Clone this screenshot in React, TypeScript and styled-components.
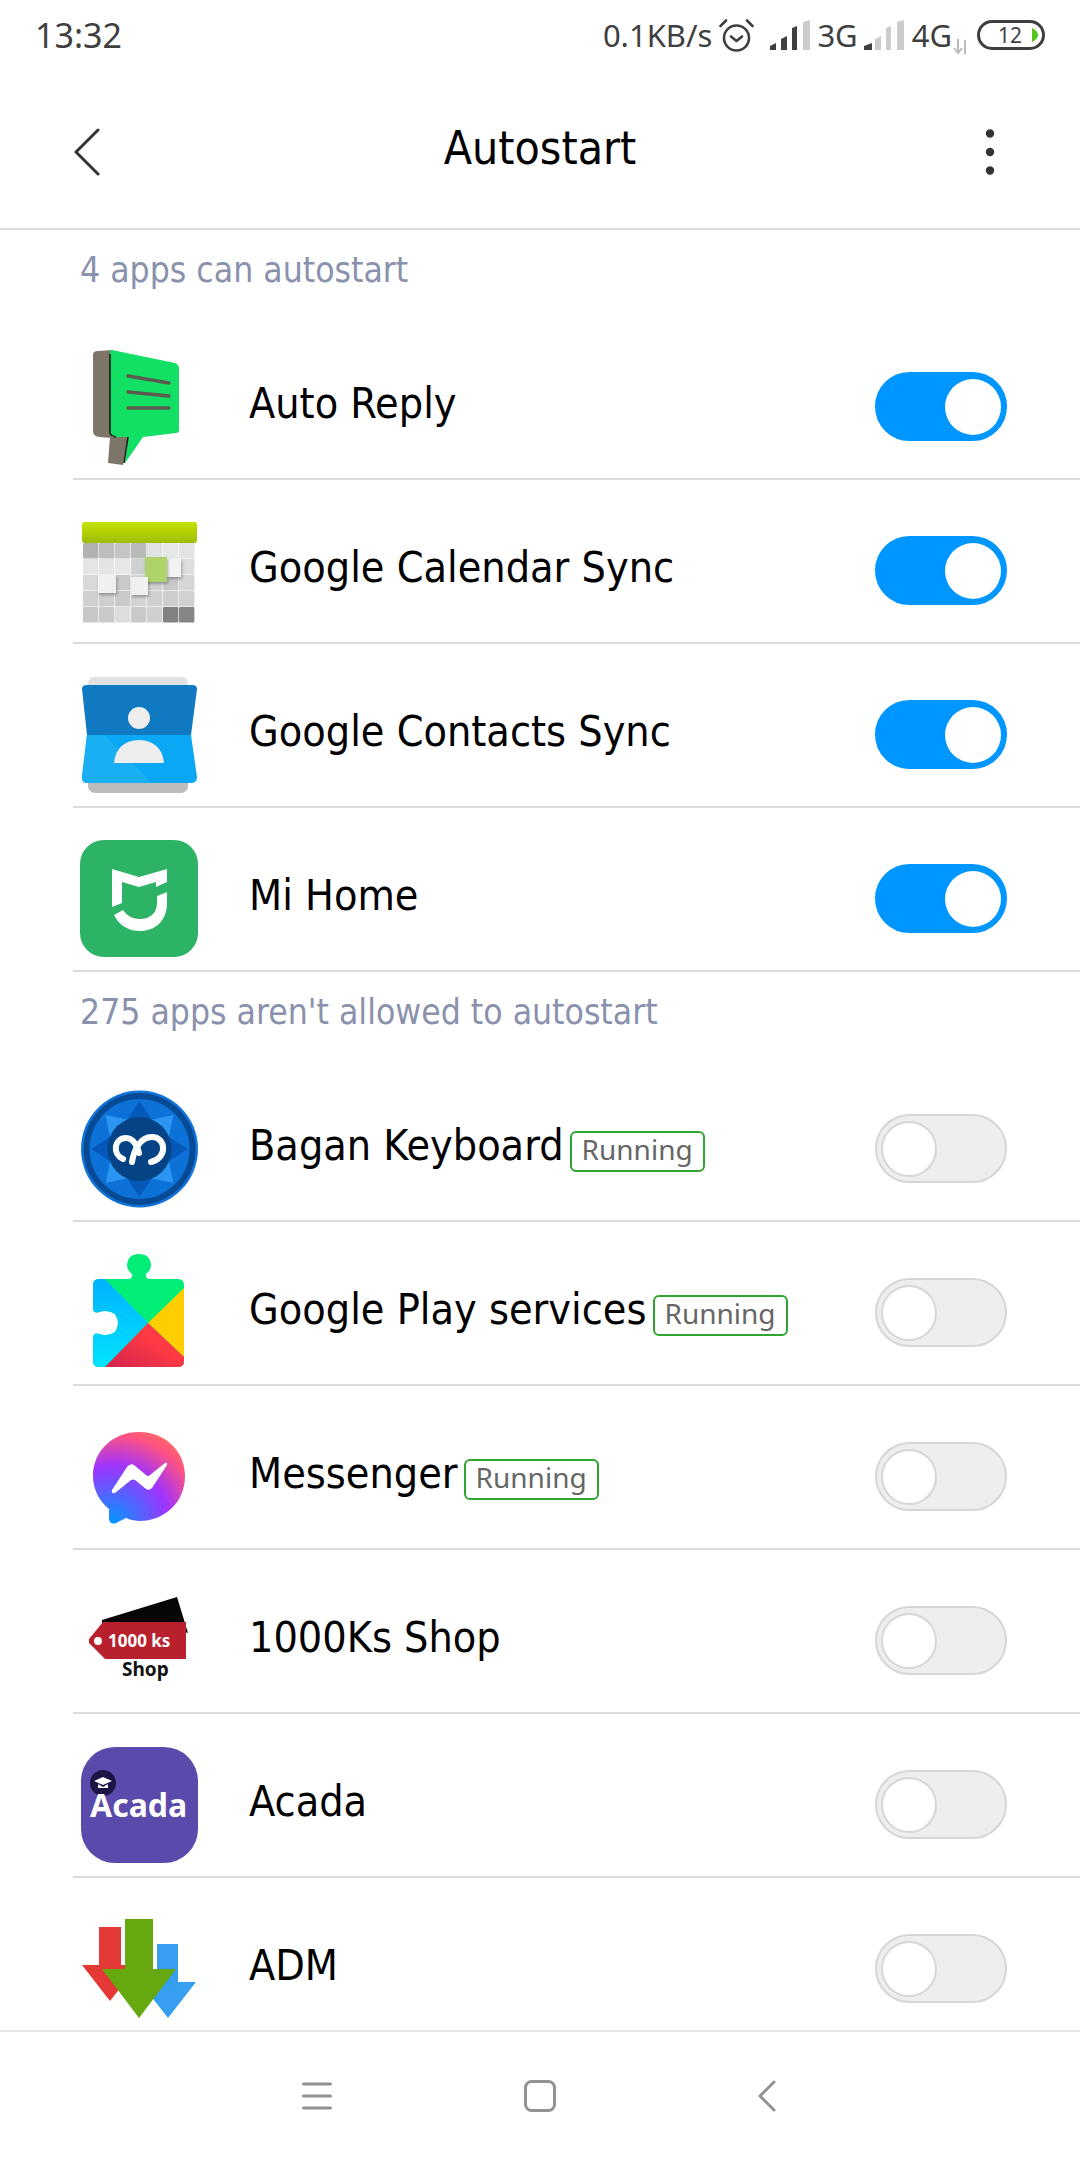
import React from 'react';
import styled, { createGlobalStyle } from 'styled-components';

const GlobalStyle = createGlobalStyle`
  html, body { margin: 0; padding: 0; background: #fff; }
  body { font-family: "DejaVu Sans", "Noto Sans", sans-serif; font-stretch: condensed; }
`;

const Screen = styled.div`
  width: 1080px;
  height: 2160px;
  display: flex;
  flex-direction: column;
  background: #fff;
  overflow: hidden;
`;

const StatusBar = styled.div`
  height: 70px;
  flex: none;
  display: flex;
  align-items: center;
  padding: 0 35px 0 35px;
  color: #3f3f3f;
  font-family: "Noto Sans", sans-serif;
  font-size: 31px;
  font-stretch: normal;
`;

const Clock = styled.span`
  flex: 1;
  font-size: 34px;
`;

const StatusItem = styled.span<{ $gap?: number }>`
  display: flex;
  align-items: center;
  margin-left: ${(p) => p.$gap ?? 0}px;
`;

const Header = styled.div`
  height: 160px;
  flex: none;
  display: grid;
  grid-template-columns: 1fr auto 1fr;
  align-items: center;
  box-sizing: border-box;
  padding-top: 5px;
  border-bottom: 2px solid #dcdcdc;
`;

const BackSlot = styled.div`
  display: flex;
  padding-left: 74px;
`;

const MenuSlot = styled.div`
  display: flex;
  justify-content: flex-end;
  padding-right: 85px;
`;

const Title = styled.div`
  font-size: 46px;
  color: #000;
  margin-top: -7px;
`;

const List = styled.div`
  flex: 1;
  min-height: 0;
  overflow: hidden;
`;

const SectionLabel = styled.div`
  height: 86px;
  box-sizing: border-box;
  padding: 20px 0 0 80px;
  font-size: 35.2px;
  line-height: 40px;
  color: #8a91ad;
`;

const Row = styled.div`
  height: 164px;
  box-sizing: border-box;
  margin-left: 73px;
  padding: 18px 73px 0 7px;
  display: flex;
  align-items: center;
  border-bottom: 2px solid #dcdcdc;
`;

const IconSlot = styled.div`
  width: 120px;
  height: 120px;
  flex: none;
  margin-right: 49px;
`;

const Name = styled.div`
  font-size: 42.7px;
  color: #000;
  margin-top: -6px;
`;

const Badge = styled.span`
  margin: 6px 0 0 6px;
  height: 41px;
  box-sizing: border-box;
  padding: 0 10px 4px;
  display: inline-flex;
  align-items: center;
  border: 2px solid #2fa52f;
  border-radius: 6px;
  font-family: "Noto Sans", sans-serif;
  font-stretch: normal;
  font-size: 28px;
  color: #666;
`;

const Spacer = styled.div`
  flex: 1;
`;

const Switch = styled.div<{ $on?: boolean }>`
  position: relative;
  width: 132px;
  height: 69px;
  flex: none;
  box-sizing: border-box;
  border-radius: 35px;
  background: ${(p) => (p.$on ? '#0096ff' : '#eeeeee')};
  border: 2px solid ${(p) => (p.$on ? '#0096ff' : '#d6d6d6')};
`;

const Knob = styled.div<{ $on?: boolean }>`
  position: absolute;
  top: 5px;
  width: 56px;
  height: 56px;
  box-sizing: border-box;
  border-radius: 50%;
  background: #fff;
  left: ${(p) => (p.$on ? 68 : 4)}px;
  border: ${(p) => (p.$on ? 'none' : '2px solid #d6d6d6')};
`;

const NavBar = styled.div`
  height: 130px;
  flex: none;
  box-sizing: border-box;
  border-top: 2px solid #e8e8e8;
  display: flex;
  align-items: center;
  justify-content: center;
  gap: 192px;
  padding-right: 2px;
  background: #fff;
`;

const NavBack = styled.span`
  display: flex;
  margin-left: 10px;
`;

const Toggle = ({ on }: { on?: boolean }) => (
  <Switch $on={on}>
    <Knob $on={on} />
  </Switch>
);

const AutoReplyIcon = () => (
  <svg width="120" height="120" viewBox="0 0 120 120">
    <path d="M13 9 Q13 5 18 5 L32 4 L32 92 L19 91 Q13 90 13 85Z" fill="#7d7668" />
    <path d="M30 91 L48 91 L43 119 L28 117Z" fill="#7d7668" />
    <path d="M32 4 L95 17 Q99 19 99 22 L99 84 Q99 87 96 87 L63 91 L45 117 L48 91 L36 91 Q30 90 30 86 L30 8 Q30 4 32 4Z" fill="#12e064" />
    <path d="M30 8 L30 87 Q31 90 36 91 M48 91 L44 117" fill="none" stroke="#1c1c18" strokeWidth="1.6" />
    <path d="M48 30 L89 37 M48 46 L89 50 M48 62 L89 62" stroke="#5d5a4f" strokeWidth="3.4" strokeLinecap="round" />
  </svg>
);

const CalendarIcon = () => {
  const shades = [
    ['#b0b2b0', '#bcbebc', '#c4c6c4', '#b8bab8', '#e0e2e2', '#e6e8e8', '#e2e4e4'],
    ['#e4e6e6', '#e3e5e5', '#e6e8e8', '#cfd1d1', '#d8dada', '#e6e8e8', '#dcdede'],
    ['#d8dada', '#dcdede', '#c8caca', '#d4d6d6', '#d0d2d2', '#c8caca', '#d4d6d6'],
    ['#cfd1d1', '#cdcfcf', '#c9cbcb', '#d2d4d4', '#cfd1d1', '#cdcfcf', '#d0d2d2'],
    ['#c6c8c8', '#c9cbcb', '#dcdede', '#c8caca', '#cfd1d1', '#808282', '#858787'],
  ];
  return (
    <svg width="120" height="120" viewBox="0 0 120 120">
      <defs>
        <linearGradient id="calTop" x1="0" y1="0" x2="0" y2="1">
          <stop offset="0" stopColor="#c6e200" />
          <stop offset="1" stopColor="#9dbd0a" />
        </linearGradient>
        <filter id="calShadow" x="-30%" y="-30%" width="160%" height="160%">
          <feDropShadow dx="1" dy="2" stdDeviation="1.5" floodColor="#000" floodOpacity="0.3" />
        </filter>
      </defs>
      {shades.map((row, r) =>
        row.map((c, i) => (
          <rect key={`${r}-${i}`} x={3 + i * 16} y={33 + r * 16} width={15.4} height={15.4} rx="1" fill={c} />
        )),
      )}
      <rect x="2" y="12" width="115" height="21" rx="3" fill="url(#calTop)" />
      <rect x="87" y="49" width="14" height="18" fill="#f2f2f2" filter="url(#calShadow)" />
      <rect x="65" y="47" width="22" height="25" fill="#aed36b" filter="url(#calShadow)" />
      <rect x="51" y="67" width="17" height="18" fill="#f0f0f0" filter="url(#calShadow)" />
      <rect x="18" y="65" width="18" height="18" fill="#f0f0f0" filter="url(#calShadow)" />
    </svg>
  );
};

const ContactsIcon = () => (
  <svg width="120" height="120" viewBox="0 0 120 120">
    <rect x="8" y="3" width="100" height="22" rx="6" fill="#e2e2e2" />
    <rect x="8" y="97" width="100" height="22" rx="7" fill="#bcbcbc" />
    <path d="M2 15 Q2 11 7 11 L112 11 Q117 11 117 15 L111 61 L7 61Z" fill="#0f79c2" />
    <path d="M7 61 L111 61 L117 103 Q117 109 111 109 L7 109 Q2 109 2 103Z" fill="#09a7f4" />
    <path d="M7 61 L24 61 L72 109 L7 109 Q2 109 2 103Z" fill="#1aaef3" />
    <circle cx="59" cy="44" r="11" fill="#eeeeee" />
    <path d="M34 89 Q36 67 59 66 Q82 67 84 89Z" fill="#eeeeee" />
  </svg>
);

const MiHomeIcon = () => (
  <svg width="120" height="120" viewBox="0 0 120 120">
    <rect x="0" y="2" width="118" height="117" rx="24" fill="#2cb366" />
    <path d="M32 31 L59 39 L87 31 L87 44 L76 49 L76 44 L59 49 L42 44 L42 65 L32 69Z" fill="#fff" />
    <path d="M87 54 L87 67 C86 84 74 93 60 93 C48 93 39 87 34 77 L43 72 C47 78 53 81 60 81 C70 81 77 75 77 65 L77 58Z" fill="#fff" />
  </svg>
);

const BaganIcon = () => {
  const petals = [0, 45, 90, 135, 180, 225, 270, 315];
  return (
    <svg width="120" height="120" viewBox="0 0 120 120">
      <circle cx="59.5" cy="61" r="58.5" fill="#1273d8" />
      <circle cx="59.5" cy="61" r="56" fill="#064a96" />
      <circle cx="59.5" cy="61" r="50" fill="#0c72d8" />
      {petals.map((a) => (
        <path key={a} d="M59.5 13 L72 32 L59.5 42 L47 32Z" fill={a % 90 === 0 ? '#0558b8' : '#2a96f2'} transform={`rotate(${a} 59.5 61)`} />
      ))}
      <circle cx="59.5" cy="61" r="32" fill="#064385" />
      <path d="M43 71 C32 66 34 50 46 50 C54 50 58 60 59 65" fill="none" stroke="#fff" strokeWidth="6" strokeLinecap="round" />
      <path d="M52 74 C54 62 60 49 72 49 C86 49 88 70 71 74" fill="none" stroke="#fff" strokeWidth="6" strokeLinecap="round" />
    </svg>
  );
};

const PlayIcon = () => (
  <svg width="120" height="120" viewBox="0 0 120 120">
    <defs>
      <linearGradient id="playRed" x1="0" y1="1" x2="1" y2="0">
        <stop offset="0" stopColor="#d2224f" />
        <stop offset="0.6" stopColor="#ff3a44" />
      </linearGradient>
      <linearGradient id="playBlue" x1="0" y1="0" x2="0" y2="1">
        <stop offset="0" stopColor="#00b2ff" />
        <stop offset="1" stopColor="#00e3ff" />
      </linearGradient>
      <clipPath id="playClip">
        <path d="M19 27 Q13 27 13 33 L13 57 Q14 62 19 60 Q28 57 35 62 Q41 71 35 80 Q28 85 19 82 Q14 80 13 85 L13 109 Q13 115 19 115 L98 115 Q104 115 104 109 L104 33 Q104 27 98 27 L69 27 Q65 26 66 22 Q71 18 71 13 Q70 2 59 2 Q48 2 47 13 Q47 18 52 22 Q53 26 49 27Z" />
      </clipPath>
    </defs>
    <g clipPath="url(#playClip)">
      <rect x="0" y="0" width="120" height="120" fill="#00ee76" />
      <path d="M10 27 L25 27 L68 71 L25 115 L10 115Z" fill="url(#playBlue)" />
      <path d="M104 36 L104 105 L68 71Z" fill="#ffce00" />
      <path d="M25 115 L68 71 L104 105 L104 115Z" fill="url(#playRed)" />
    </g>
  </svg>
);

const MessengerIcon = () => (
  <svg width="120" height="120" viewBox="0 0 120 120">
    <defs>
      <radialGradient id="msgBg" cx="0.2" cy="1" r="1.15">
        <stop offset="0" stopColor="#0099ff" />
        <stop offset="0.55" stopColor="#a033ff" />
        <stop offset="0.85" stopColor="#ff5280" />
        <stop offset="1" stopColor="#ff7061" />
      </radialGradient>
    </defs>
    <path d="M59 16 C33 16 13 35 13 60 C13 73 19 85 29 93 L29 103 Q30 109 36 107 L46 102 Q52 105 59 105 C85 105 105 86 105 60 C105 35 85 16 59 16Z" fill="url(#msgBg)" />
    <path d="M32 74 L47 51 Q50 47 54 49 L66 59 Q68 61 70 59 L85 47 Q88 46 87 49 L72 72 Q69 75 66 73 L55 64 Q53 63 51 64 L35 77 Q31 78 32 74Z" fill="#fff" />
  </svg>
);

const ShopIcon = () => (
  <svg width="120" height="120" viewBox="0 0 120 120">
    <path d="M22 40 L97 17 L108 53 L100 50 L22 44Z" fill="#060606" />
    <path d="M23 42 L106 42 L106 79 L25 79 L9 63 L9 59Z" fill="#b8202e" />
    <circle cx="18" cy="61" r="4" fill="#fff" />
    <text x="28" y="67" fontFamily="Noto Sans, sans-serif" fontWeight="700" fontSize="17" fill="#fff">1000 ks</text>
    <text x="42" y="96" fontFamily="Noto Sans, sans-serif" fontWeight="700" fontSize="19" fill="#111">Shop</text>
  </svg>
);

const AcadaIcon = () => (
  <svg width="120" height="120" viewBox="0 0 120 120">
    <rect x="1" y="3" width="117" height="116" rx="34" fill="#5a4aab" />
    <circle cx="23" cy="39" r="13" fill="#1b1546" />
    <path d="M14 37 L23 33 L32 37 L23 41Z M18 40 L18 44 L28 44 L28 40 L23 43Z" fill="#fff" />
    <text x="10" y="73" fontFamily="Noto Sans, sans-serif" fontWeight="700" fontSize="32" fill="#fff">Acada</text>
  </svg>
);

const AdmIcon = () => (
  <svg width="120" height="120" viewBox="0 0 120 120">
    <path d="M19 19 L41 19 L41 57 L58 57 L30 93 L2 57 L19 57Z" fill="#e53935" />
    <path d="M77 36 L98 36 L98 74 L116 74 L88 110 L60 74 L77 74Z" fill="#369ff0" />
    <path d="M45 11 L73 11 L73 61 L96 61 L59 110 L22 61 L45 61Z" fill="#66a80f" />
  </svg>
);

const apps1 = [
  { name: 'Auto Reply', icon: <AutoReplyIcon /> },
  { name: 'Google Calendar Sync', icon: <CalendarIcon /> },
  { name: 'Google Contacts Sync', icon: <ContactsIcon /> },
  { name: 'Mi Home', icon: <MiHomeIcon /> },
];

const apps2 = [
  { name: 'Bagan Keyboard', icon: <BaganIcon />, running: true },
  { name: 'Google Play services', icon: <PlayIcon />, running: true },
  { name: 'Messenger', icon: <MessengerIcon />, running: true },
  { name: '1000Ks Shop', icon: <ShopIcon /> },
  { name: 'Acada', icon: <AcadaIcon /> },
  { name: 'ADM', icon: <AdmIcon /> },
];

export default function App() {
  return (
    <Screen>
      <GlobalStyle />
      <StatusBar>
        <Clock>13:32</Clock>
        <StatusItem>0.1KB/s</StatusItem>
        <StatusItem $gap={7}>
          <svg width="35" height="34" viewBox="0 0 35 34" fill="none" stroke="#3f3f3f" strokeWidth="2.6" strokeLinecap="round" strokeLinejoin="round">
            <circle cx="17.5" cy="20" r="12.5" />
            <path d="M12 18.5 L17.5 23 L23 18.5" />
            <path d="M1.5 8 L7 2.5 M33.5 8 L28 2.5" />
          </svg>
        </StatusItem>
        <StatusItem $gap={16}>
          <svg width="40" height="30" viewBox="0 0 40 30">
            <path d="M0 30 L0 26 L6 23 L6 30Z M11 30 L11 19 L17 16 L17 30Z M22 30 L22 8 L27 6 L27 30Z" fill="#3f3f3f" />
            <path d="M33 30 L33 2 L40 0 L40 30Z" fill="#cccccc" />
          </svg>
        </StatusItem>
        <StatusItem $gap={7}>3G</StatusItem>
        <StatusItem $gap={6}>
          <svg width="40" height="30" viewBox="0 0 40 30">
            <path d="M0 30 L0 26 L8 23 L8 30Z" fill="#3f3f3f" />
            <path d="M11 30 L11 19 L17 16 L17 30Z M22 30 L22 8 L27 6 L27 30Z M33 30 L33 2 L40 0 L40 30Z" fill="#cccccc" />
          </svg>
        </StatusItem>
        <StatusItem $gap={8}>4G</StatusItem>
        <StatusItem $gap={2}>
          <svg width="14" height="15" viewBox="0 0 14 15" style={{ marginTop: 22 }} fill="none" stroke="#bbb" strokeWidth="2">
            <path d="M4 0 L4 14 M0 9 L4 14 L8 9 M11 15 L11 1" />
          </svg>
        </StatusItem>
        <StatusItem $gap={9}>
          <svg width="68" height="30" viewBox="0 0 68 30">
            <rect x="1.5" y="1.5" width="65" height="27" rx="13.5" fill="none" stroke="#3f3f3f" strokeWidth="3" />
            <path d="M55 8 Q61 11 61 15 Q61 19 55 22Z" fill="#52c41a" />
            <text x="21" y="23" fontFamily="Noto Sans, sans-serif" fontSize="21" fill="#3f3f3f">12</text>
          </svg>
        </StatusItem>
      </StatusBar>

      <Header>
        <BackSlot>
          <svg width="26" height="48" viewBox="0 0 26 48" fill="none" stroke="#333" strokeWidth="3" strokeLinecap="round" strokeLinejoin="round">
            <path d="M24 2 L2 24 L24 46" />
          </svg>
        </BackSlot>
        <Title>Autostart</Title>
        <MenuSlot>
          <svg width="10" height="46" viewBox="0 0 10 46" fill="#333">
            <circle cx="5" cy="4.5" r="4.2" />
            <circle cx="5" cy="23" r="4.2" />
            <circle cx="5" cy="41.5" r="4.2" />
          </svg>
        </MenuSlot>
      </Header>

      <List>
        <SectionLabel>4 apps can autostart</SectionLabel>
        {apps1.map((a) => (
          <Row key={a.name}>
            <IconSlot>{a.icon}</IconSlot>
            <Name>{a.name}</Name>
            <Spacer />
            <Toggle on />
          </Row>
        ))}
        <SectionLabel>275 apps aren't allowed to autostart</SectionLabel>
        {apps2.map((a) => (
          <Row key={a.name}>
            <IconSlot>{a.icon}</IconSlot>
            <Name>{a.name}</Name>
            {a.running && <Badge>Running</Badge>}
            <Spacer />
            <Toggle />
          </Row>
        ))}
      </List>

      <NavBar>
        <svg width="30" height="28" viewBox="0 0 30 28" stroke="#929292" strokeWidth="3" strokeLinecap="round">
          <path d="M1.5 2 L28.5 2 M1.5 14 L28.5 14 M1.5 26 L28.5 26" />
        </svg>
        <svg width="32" height="32" viewBox="0 0 32 32" fill="none" stroke="#929292" strokeWidth="3">
          <rect x="1.5" y="1.5" width="29" height="29" rx="6" />
        </svg>
        <NavBack>
          <svg width="18" height="32" viewBox="0 0 18 32" fill="none" stroke="#929292" strokeWidth="3" strokeLinecap="round" strokeLinejoin="round">
            <path d="M16 2 L2 16 L16 30" />
          </svg>
        </NavBack>
      </NavBar>
    </Screen>
  );
}
